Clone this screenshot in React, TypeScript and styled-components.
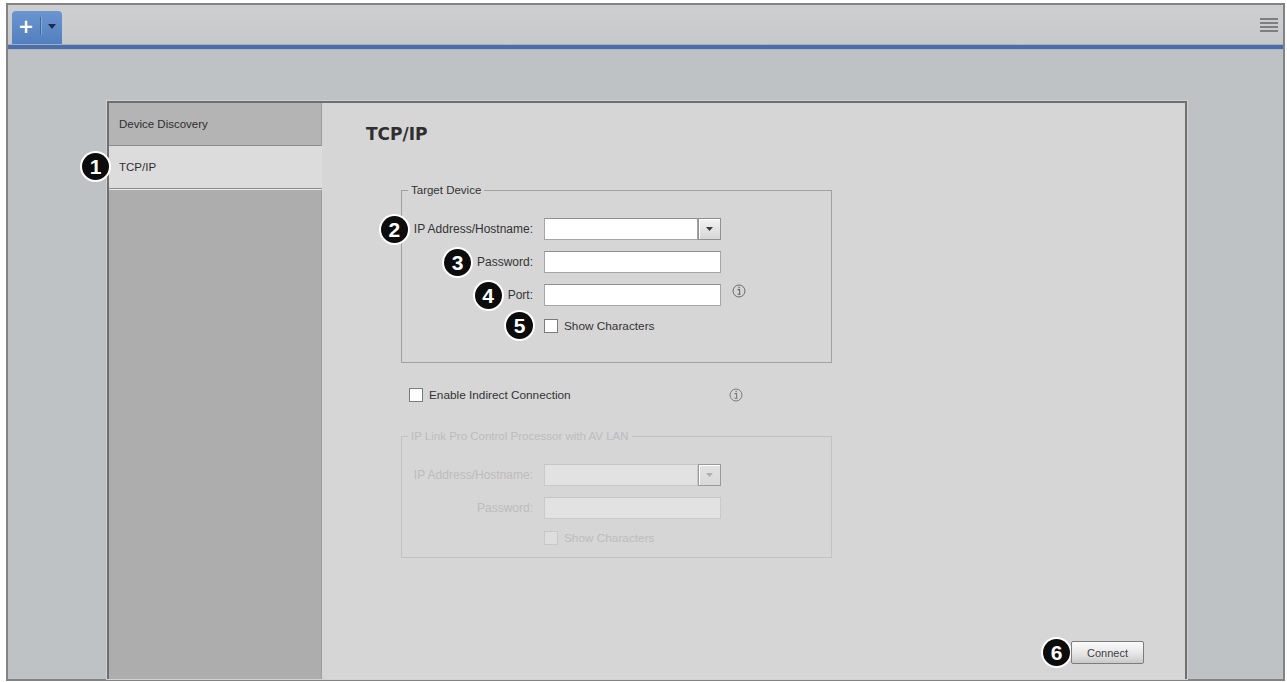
import React from "react";
import styled, { createGlobalStyle } from "styled-components";

const GlobalStyle = createGlobalStyle`
  html, body { margin: 0; padding: 0; background: #ffffff; }
  body {
    width: 1287px;
    height: 682px;
    overflow: hidden;
    font-family: "Liberation Sans", Arial, sans-serif;
  }
  #root { height: 100%; }
  * { box-sizing: border-box; }
`;

const Window = styled.div`
  margin: 3px 2px 0 6px;
  height: 678px;
  border: 2px solid #838383;
  display: flex;
  flex-direction: column;
  background: #bfc2c5;
`;

const TopBar = styled.div`
  height: 39px;
  flex: none;
  display: flex;
  align-items: flex-start;
  justify-content: space-between;
  background: linear-gradient(#cdcfd1, #c6c8ca);
  padding: 6px 5px 0 4px;
`;

const NewTab = styled.div`
  width: 50px;
  height: 33px;
  border-radius: 4px 4px 0 0;
  background: linear-gradient(#6b95cf, #527fbf);
  display: flex;
  align-items: center;
  padding: 0 0 3px 0;
`;

const PlusPart = styled.span`
  width: 28px;
  text-align: center;
  color: #ffffff;
  font: bold 19px/1 "DejaVu Sans", sans-serif;
`;

const TabDivider = styled.span`
  width: 1px;
  height: 18px;
  background: #3f679f;
  box-shadow: 1px 0 0 #86a6d4;
`;

const ArrowPart = styled.span`
  flex: 1;
  display: flex;
  justify-content: center;
`;

const Hamburger = styled.div`
  margin-top: 7px;
  width: 18px;
  display: flex;
  flex-direction: column;
  gap: 2px;
  span {
    display: block;
    height: 2px;
    background: #7e7f80;
  }
`;

const BlueLine = styled.div`
  flex: none;
  height: 6px;
  background: #4c6da6;
  border-top: 1px solid #9db1cf;
  border-bottom: 1px solid #a9b6c8;
`;

const Workspace = styled.div`
  flex: 1;
  display: flex;
  padding: 51px 96px 0 99px;
  min-height: 0;
`;

const Dialog = styled.div`
  flex: 1;
  display: flex;
  border: 2px solid #6f6f6f;
  border-bottom: 0;
  box-shadow: 0 0 0 1px #cfd1d3;
  background: #d6d6d6;
`;

const Sidebar = styled.div`
  width: 213px;
  flex: none;
  display: flex;
  flex-direction: column;
  background: #adadad;
  border-right: 1px solid #9c9c9c;
`;

const SideTab = styled.div<{ $active?: boolean }>`
  position: relative;
  height: 43px;
  display: flex;
  align-items: center;
  padding-left: 10px;
  font-size: 11.5px;
  color: #2e2e2e;
  background: ${(p) => (p.$active ? "#dcdcdc" : "#b4b4b4")};
  border-bottom: 1px solid ${(p) => (p.$active ? "#8d8d8d" : "#8a8a8a")};
  box-shadow: ${(p) => (p.$active ? "0 1px 0 #e8e8e8" : "none")};
  margin-right: ${(p) => (p.$active ? "-1px" : "0")};
`;

const Badge = styled.span`
  flex: none;
  width: 27px;
  height: 27px;
  margin: -5px 0;
  border-radius: 50%;
  background: #0c0c0c;
  color: #ffffff;
  box-shadow: 0 0 0 2px #ffffff;
  display: inline-flex;
  align-items: center;
  justify-content: center;
  font: bold 21px/1 "Liberation Sans", Arial, sans-serif;
`;

const TabBadge = styled(Badge)`
  position: absolute;
  left: -27px;
  top: 50%;
  margin: -14px 0 0 0;
`;

const Content = styled.div`
  flex: 1;
  display: flex;
  flex-direction: column;
  padding: 21px 0 0 44px;
`;

const Title = styled.h2`
  margin: 0 0 40px 0;
  font: bold 17px/20px "DejaVu Sans", Verdana, sans-serif;
  color: #2f2f2f;
`;

const FormBlock = styled.div`
  margin-left: 35px;
  width: 431px;
  display: flex;
  flex-direction: column;
`;

const Group = styled.fieldset<{ $disabled?: boolean; $bottom: number }>`
  margin: 0;
  min-width: 0;
  padding: 21px 0 ${(p) => p.$bottom}px 0;
  border: 1px solid ${(p) => (p.$disabled ? "#c2c2c2" : "#a1a1a1")};
  color: ${(p) => (p.$disabled ? "#bcbcbc" : "#333333")};
`;

const Legend = styled.legend`
  margin-left: 6px;
  padding: 0 3px;
  font-size: 11.5px;
  line-height: 13px;
`;

const FieldGrid = styled.div`
  display: grid;
  grid-template-columns: 131px 177px 1fr;
  column-gap: 11px;
  row-gap: 11px;
  align-items: center;
`;

const Label = styled.div`
  display: flex;
  justify-content: flex-end;
  align-items: center;
  gap: 6px;
  font-size: 12px;
  line-height: 13px;
  white-space: nowrap;
`;

const Combo = styled.div`
  display: flex;
  height: 22px;
`;

const TextBox = styled.div<{ $disabled?: boolean }>`
  flex: 1;
  height: 22px;
  background: ${(p) => (p.$disabled ? "#e2e2e2" : "#ffffff")};
  border: 1px solid ${(p) => (p.$disabled ? "#cacaca" : "#a6a6a6")};
  border-top-color: ${(p) => (p.$disabled ? "#c4c4c4" : "#8f8f8f")};
`;

const DropButton = styled.div<{ $disabled?: boolean }>`
  width: 23px;
  height: 22px;
  flex: none;
  display: flex;
  align-items: center;
  justify-content: center;
  border: 1px solid ${(p) => (p.$disabled ? "#9a9a9a" : "#909090")};
  background: ${(p) =>
    p.$disabled
      ? "linear-gradient(#e2e2e2, #d8d8d8)"
      : "linear-gradient(#f2f2f2, #d6d6d6)"};
  box-shadow: inset 1px 1px 0 #ffffff;
`;

const CheckRow = styled.div`
  display: flex;
  align-items: center;
  gap: 6px;
  height: 16px;
  font-size: 11.8px;
  white-space: nowrap;
`;

const CheckBox = styled.span<{ $disabled?: boolean }>`
  width: 14px;
  height: 14px;
  flex: none;
  background: ${(p) => (p.$disabled ? "#dedede" : "#ffffff")};
  border: 1px solid ${(p) => (p.$disabled ? "#c8c8c8" : "#7b7b7b")};
`;

const InfoSlot = styled.div`
  align-self: start;
  display: flex;
`;

const IndirectRow = styled.div`
  margin: 24px 0 27px 0;
  padding-left: 8px;
  display: flex;
  align-items: center;
  justify-content: space-between;
  color: #333333;
`;

const IndirectInfo = styled.span`
  display: flex;
  margin-right: 89px;
`;

const Footer = styled.div`
  margin-top: auto;
  display: flex;
  justify-content: flex-end;
  align-items: center;
  gap: 1px;
  padding: 0 41px 15px 0;
`;

const ConnectButton = styled.button`
  width: 73px;
  height: 23px;
  padding: 0;
  border: 1px solid #7c7c7c;
  border-radius: 2px;
  background: linear-gradient(#fbfbfb, #e6e6e6 55%, #c9c9c9);
  font: 11px "Liberation Sans", Arial, sans-serif;
  color: #404040;
`;

const InfoIcon = ({ color = "#6a6a6a" }: { color?: string }) => (
  <svg width="14" height="14" viewBox="0 0 14 14">
    <circle cx="7" cy="7" r="6" fill="none" stroke={color} strokeWidth="1" />
    <rect x="6.4" y="2.8" width="1.4" height="1.4" fill={color} />
    <path d="M5.5 5.6 H7.6 V10 M5.5 10.2 H8.7" fill="none" stroke={color} strokeWidth="1.1" />
  </svg>
);

const DropArrow = ({ color = "#3a3a3a" }: { color?: string }) => (
  <svg width="7" height="4" viewBox="0 0 7 4">
    <path d="M0 0 H7 L3.5 4 Z" fill={color} />
  </svg>
);

export default function App() {
  return (
    <>
      <GlobalStyle />
      <Window>
        <TopBar>
          <NewTab>
            <PlusPart>+</PlusPart>
            <TabDivider />
            <ArrowPart>
              <svg width="8" height="5" viewBox="0 0 8 5">
                <path d="M0 0 H8 L4 5 Z" fill="#1b2d52" />
              </svg>
            </ArrowPart>
          </NewTab>
          <Hamburger>
            <span />
            <span />
            <span />
            <span />
          </Hamburger>
        </TopBar>
        <BlueLine />
        <Workspace>
          <Dialog>
            <Sidebar>
              <SideTab>Device Discovery</SideTab>
              <SideTab $active>
                <TabBadge>1</TabBadge>
                TCP/IP
              </SideTab>
            </Sidebar>
            <Content>
              <Title>TCP/IP</Title>
              <FormBlock>
                <Group $bottom={28}>
                  <Legend>Target Device</Legend>
                  <FieldGrid>
                    <Label>
                      <Badge>2</Badge>
                      IP Address/Hostname:
                    </Label>
                    <Combo>
                      <TextBox />
                      <DropButton>
                        <DropArrow />
                      </DropButton>
                    </Combo>
                    <span />
                    <Label>
                      <Badge>3</Badge>
                      Password:
                    </Label>
                    <TextBox />
                    <span />
                    <Label>
                      <Badge>4</Badge>
                      Port:
                    </Label>
                    <TextBox />
                    <InfoSlot>
                      <InfoIcon />
                    </InfoSlot>
                    <Label>
                      <Badge>5</Badge>
                    </Label>
                    <CheckRow>
                      <CheckBox />
                      Show Characters
                    </CheckRow>
                    <span />
                  </FieldGrid>
                </Group>

                <IndirectRow>
                  <CheckRow>
                    <CheckBox />
                    Enable Indirect Connection
                  </CheckRow>
                  <IndirectInfo>
                    <InfoIcon color="#7a7a7a" />
                  </IndirectInfo>
                </IndirectRow>

                <Group $disabled $bottom={11}>
                  <Legend>IP Link Pro Control Processor with AV LAN</Legend>
                  <FieldGrid>
                    <Label>IP Address/Hostname:</Label>
                    <Combo>
                      <TextBox $disabled />
                      <DropButton $disabled>
                        <DropArrow color="#b0b0b0" />
                      </DropButton>
                    </Combo>
                    <span />
                    <Label>Password:</Label>
                    <TextBox $disabled />
                    <span />
                    <span />
                    <CheckRow>
                      <CheckBox $disabled />
                      Show Characters
                    </CheckRow>
                    <span />
                  </FieldGrid>
                </Group>
              </FormBlock>

              <Footer>
                <Badge>6</Badge>
                <ConnectButton>Connect</ConnectButton>
              </Footer>
            </Content>
          </Dialog>
        </Workspace>
      </Window>
    </>
  );
}
